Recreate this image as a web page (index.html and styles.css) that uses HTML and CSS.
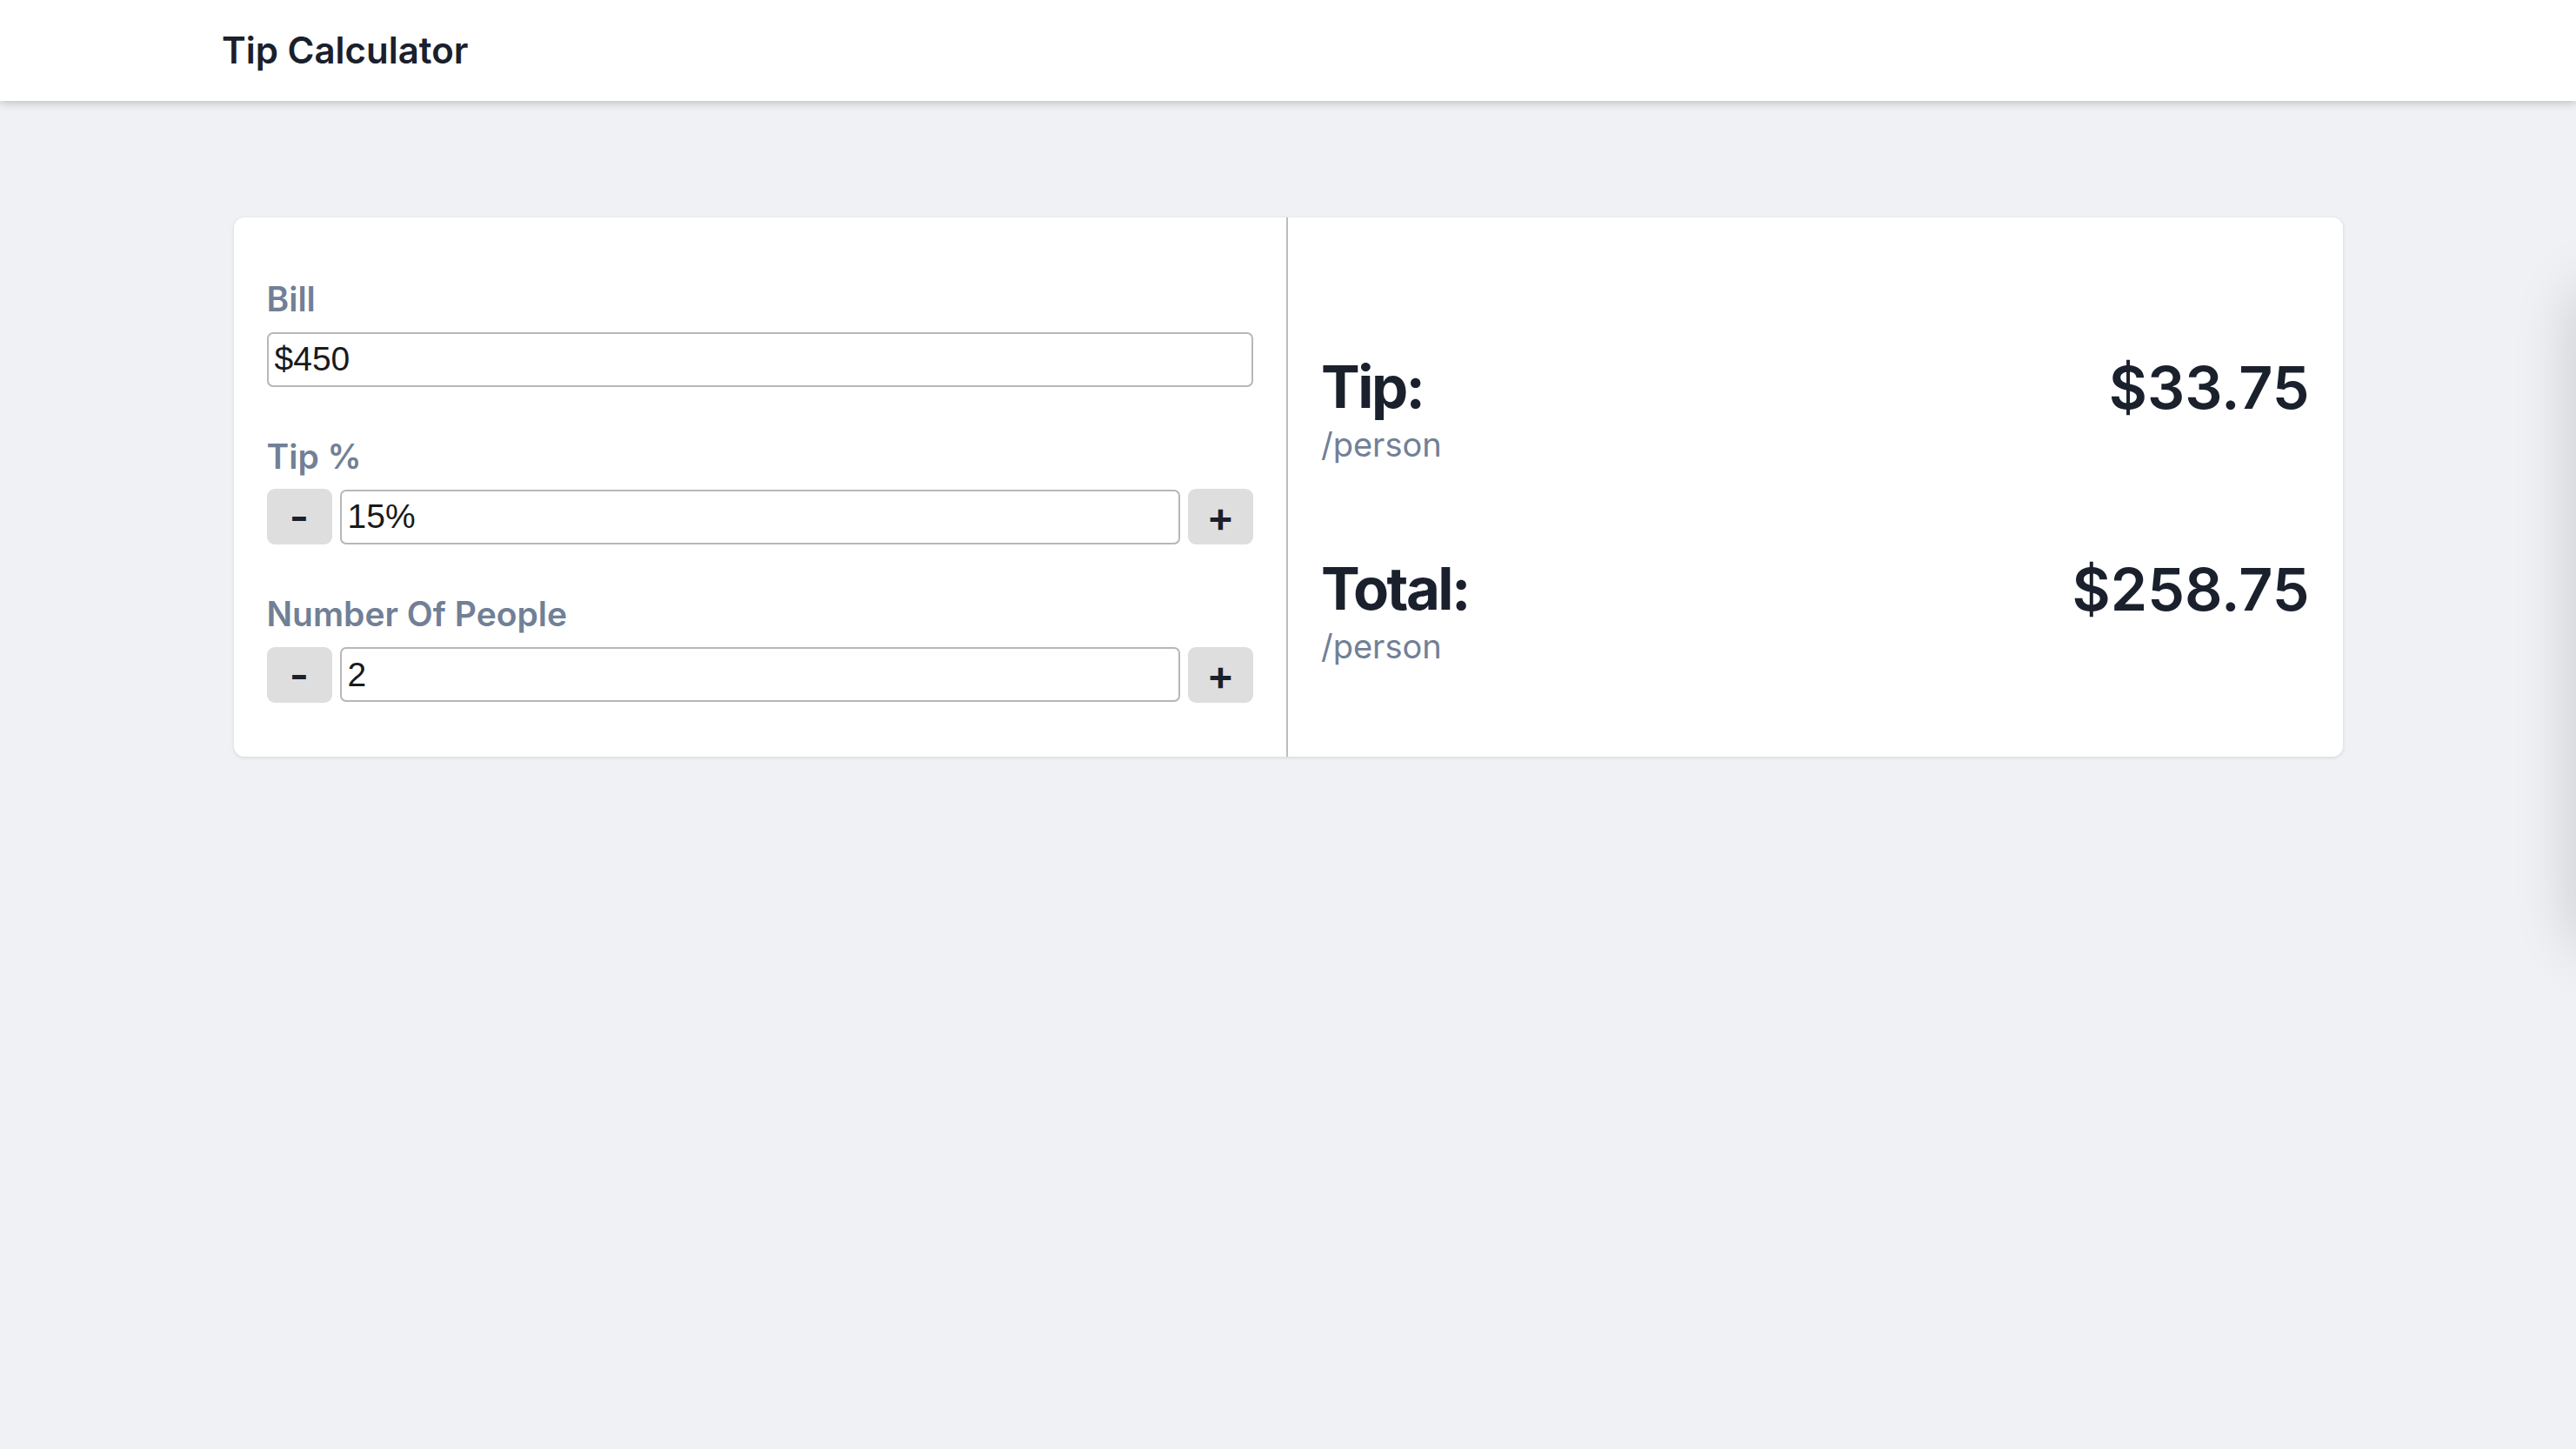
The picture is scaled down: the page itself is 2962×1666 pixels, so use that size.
FILE: index.html
```html
<!DOCTYPE html>
<html lang="en">
<head>
  <meta charset="UTF-8" />
  <meta name="viewport" content="width=device-width, initial-scale=1" />
  <title>Tip Calculator</title>
  <link rel="stylesheet" href="styles.css">
</head>
<body>

  <header class="topbar">
    <h1 class="brand">Tip Calculator</h1>
  </header>

  <main class="page">
    <div class="calc-card">
      <div class="inputs">
        <div class="field">
          <label for="bill">Bill</label>
          <input type="text" id="bill" class="text-input" value="$450">
        </div>

        <div class="field">
          <label for="tip">Tip %</label>
          <div class="stepper">
            <button type="button" class="step-btn" data-target="tip" data-step="-1">-</button>
            <input type="text" id="tip" class="text-input" value="15%">
            <button type="button" class="step-btn" data-target="tip" data-step="1">+</button>
          </div>
        </div>

        <div class="field">
          <label for="people">Number Of People</label>
          <div class="stepper">
            <button type="button" class="step-btn" data-target="people" data-step="-1">-</button>
            <input type="text" id="people" class="text-input" value="2">
            <button type="button" class="step-btn" data-target="people" data-step="1">+</button>
          </div>
        </div>
      </div>

      <div class="results">
        <div class="result-row">
          <div>
            <div class="result-title">Tip:</div>
            <div class="result-sub">/person</div>
          </div>
          <div class="result-amount" id="tipAmount">$33.75</div>
        </div>

        <div class="result-row">
          <div>
            <div class="result-title">Total:</div>
            <div class="result-sub">/person</div>
          </div>
          <div class="result-amount" id="totalAmount">$258.75</div>
        </div>
      </div>
    </div>
  </main>

  <div class="side-shade"></div>

  <script>
    function num(id) {
      return parseFloat(document.getElementById(id).value.replace(/[^0-9.]/g, '')) || 0;
    }

    function update() {
      const bill = num('bill');
      const tip = num('tip');
      const people = Math.max(1, num('people'));
      const tipPer = bill * tip / 100 / people;
      const totalPer = bill / people + tipPer;
      document.getElementById('tipAmount').textContent = '$' + tipPer.toFixed(2);
      document.getElementById('totalAmount').textContent = '$' + totalPer.toFixed(2);
    }

    document.querySelectorAll('.step-btn').forEach(btn => {
      btn.addEventListener('click', () => {
        const input = document.getElementById(btn.dataset.target);
        let val = num(btn.dataset.target) + Number(btn.dataset.step);
        if (btn.dataset.target === 'people') val = Math.max(1, val);
        else val = Math.max(0, val);
        input.value = btn.dataset.target === 'tip' ? val + '%' : val;
        update();
      });
    });

    document.querySelectorAll('.text-input').forEach(i => i.addEventListener('input', update));
  </script>

</body>
</html>
```

FILE: styles.css
```css
* {
  box-sizing: border-box;
}
body {
  margin: 0;
  min-height: 100vh;
  font-family: 'Inter', 'Noto Sans', sans-serif;
  background-color: #f0f1f5;
  color: #1a202c;
  overflow: hidden;
}
.topbar {
  height: 116px;
  background-color: white;
  display: flex;
  align-items: center;
  padding-left: 255px;
  box-shadow: 0 2px 10px rgba(0,0,0,0.22);
  position: relative;
  z-index: 1;
}
.brand {
  margin: 0;
  font-size: 42px;
  font-weight: 600;
  line-height: 1.2;
}
.page {
  padding-top: 134px;
}
.calc-card {
  width: 2425px;
  margin: 0 auto;
  background-color: white;
  border-radius: 12px;
  box-shadow: 0 1px 4px rgba(0,0,0,0.12);
  display: grid;
  grid-template-columns: 1fr 1fr;
}
.inputs {
  padding: 65px 38px 62px;
  border-right: 2px solid #bdbdbd;
  display: flex;
  flex-direction: column;
  gap: 51px;
}
.field label {
  display: block;
  font-size: 39px;
  font-weight: 600;
  line-height: 1.5;
  color: #718096;
  margin-bottom: 8px;
}
.text-input {
  display: block;
  width: 100%;
  height: 63px;
  border: 2px solid #b7b7b7;
  border-radius: 7px;
  padding: 0 7px;
  font-family: 'Liberation Sans', Arial, sans-serif;
  font-size: 39px;
  color: #1a1a1a;
  background-color: white;
}
.stepper {
  display: flex;
  align-items: center;
  gap: 9px;
}
.stepper .text-input {
  flex: 1;
}
.step-btn {
  flex: none;
  width: 75px;
  height: 64px;
  border: none;
  border-radius: 9px;
  background-color: #dedede;
  color: #1a202c;
  font-family: 'Inter', sans-serif;
  font-size: 48px;
  font-weight: 600;
  line-height: 1;
  cursor: pointer;
  padding: 0;
}
.step-btn:hover {
  background-color: #d2d2d2;
}
.results {
  padding: 155px 38px 0;
  display: flex;
  flex-direction: column;
  gap: 101px;
}
.result-row {
  display: flex;
  justify-content: space-between;
  align-items: flex-start;
}
.result-title {
  font-size: 67px;
  font-weight: 700;
  line-height: 1.2;
  letter-spacing: -2.5px;
}
.result-sub {
  font-size: 38px;
  line-height: 1.25;
  padding-top: 3px;
  color: #718096;
}
.result-amount {
  font-size: 68px;
  font-weight: 600;
  line-height: 1.2;
}
.side-shade {
  position: fixed;
  right: -60px;
  top: 330px;
  width: 60px;
  height: 760px;
  border-radius: 30px;
  box-shadow: 0 0 70px rgba(0,0,0,0.18);
}
```
